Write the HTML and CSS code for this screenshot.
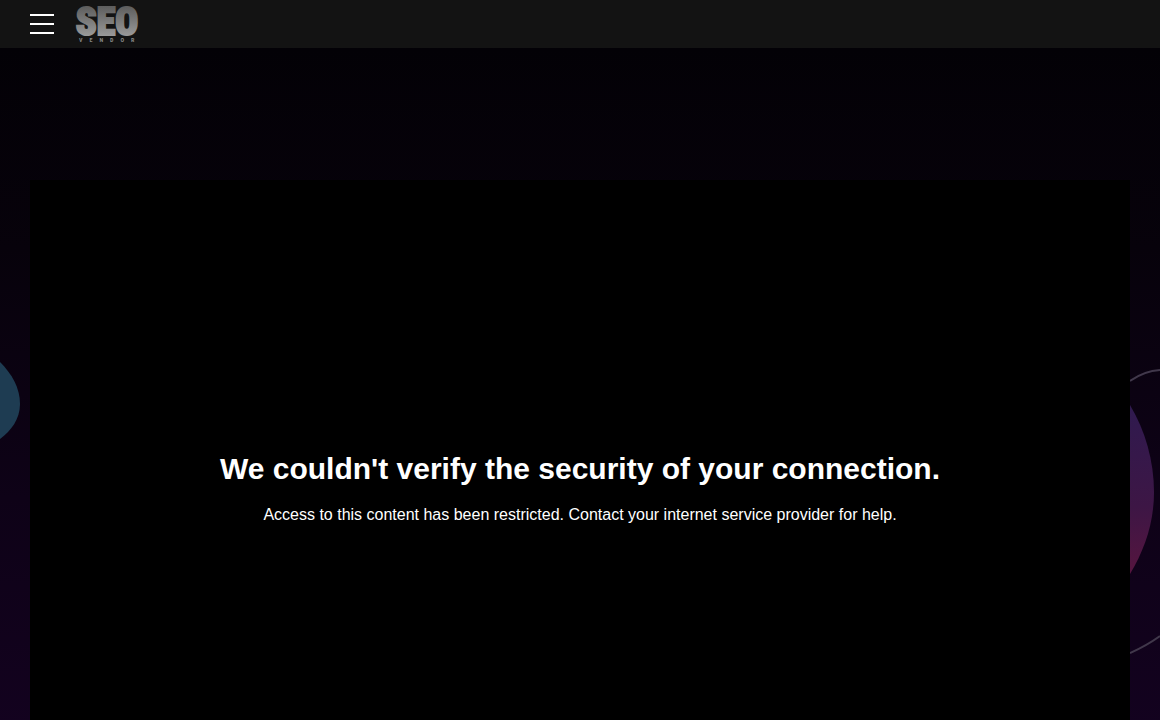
FILE: index.html
```html
<!DOCTYPE html>
<html lang="en">
<head>
    <meta charset="UTF-8">
    <meta name="viewport" content="width=device-width, initial-scale=1.0">
    <title>SEO Vendor</title>
    <link rel="stylesheet" href="styles.css">
</head>
<body>
    <header class="header">
        <button type="button" class="menu-toggle" aria-label="Menu">
            <span></span>
            <span></span>
            <span></span>
        </button>
        <a href="#" class="logo" aria-label="SEO Vendor">
            <svg width="62" height="38" viewBox="0 0 62 38">
                <defs>
                    <linearGradient id="metal" x1="0" y1="0" x2="0" y2="1">
                        <stop offset="0" stop-color="#505050"/>
                        <stop offset="1" stop-color="#aaa"/>
                    </linearGradient>
                </defs>
                <text class="logo-main" x="31" y="30" text-anchor="middle">SEO</text>
                <text class="logo-sub" x="3" y="37">VENDOR</text>
            </svg>
        </a>
    </header>
    <main class="main">
        <!-- background shapes -->
        <svg class="shape shape-left" width="20" height="90" viewBox="0 0 20 90" aria-hidden="true">
            <path d="M0 8C12 20 20 34 20 50C20 65 11 77 0 85Z" fill="#1e3c52"/>
        </svg>
        <svg class="shape shape-right" width="30" height="300" viewBox="0 0 30 300" aria-hidden="true">
            <defs>
                <linearGradient id="purple" x1="0" y1="0" x2="0" y2="1">
                    <stop offset="0" stop-color="#2f1a4f"/>
                    <stop offset="0.6" stop-color="#3d1645"/>
                    <stop offset="1" stop-color="#56153f"/>
                </linearGradient>
            </defs>
            <path d="M0 45C15 70 24 101 24 132C24 162 15 189 0 214Z" fill="url(#purple)"/>
            <path d="M0 21Q14 11 30 10M0 293Q16 286 30 276" fill="none" stroke="#41384b" stroke-width="2"/>
        </svg>
        <section class="player">
            <h1>We couldn't verify the security of your connection.</h1>
            <p>Access to this content has been restricted. Contact your internet service provider for help.</p>
        </section>
    </main>
</body>
</html>
```
FILE: styles.css
```css
* {
    box-sizing: border-box;
}
body {
    margin: 0;
    min-height: 100vh;
    background-color: #030106;
    color: #fff;
    font-family: "Liberation Sans", Arial, sans-serif;
}
.header {
    display: flex;
    align-items: center;
    gap: 22px;
    height: 48px;
    padding: 0 30px;
    background-color: #131313;
}
.menu-toggle {
    display: flex;
    flex-direction: column;
    gap: 7px;
    width: 24px;
    padding: 0;
    border: none;
    background: none;
    cursor: pointer;
}
.menu-toggle span {
    height: 2px;
    background-color: #fff;
}
.logo svg {
    display: block;
    overflow: visible;
}
.logo-main {
    font-family: "Roboto Condensed", Roboto, sans-serif;
    font-size: 38px;
    font-weight: 900;
    fill: url(#metal);
    stroke: url(#metal);
    stroke-width: 2px;
}
.logo-sub {
    font-family: "Roboto Condensed", Roboto, sans-serif;
    font-size: 6px;
    font-weight: bold;
    letter-spacing: 7px;
    fill: #888;
}
.main {
    position: relative;
    padding: 132px 30px 60px;
    background: linear-gradient(#030106 0, #07020b 200px, #0e0217 450px, #13021f 680px);
}
.shape {
    position: absolute;
}
.shape-left {
    top: 306px;
    left: 0;
}
.shape-right {
    top: 312px;
    right: 0;
}
.player {
    display: flex;
    flex-direction: column;
    align-items: center;
    justify-content: center;
    aspect-ratio: 16 / 9;
    padding-bottom: 4px;
    background-color: #000;
    text-align: center;
}
.player h1 {
    margin: 0 0 16px;
    font-size: 30px;
    line-height: 40px;
}
.player p {
    margin: 0;
    font-size: 16px;
    line-height: 20px;
}
```
